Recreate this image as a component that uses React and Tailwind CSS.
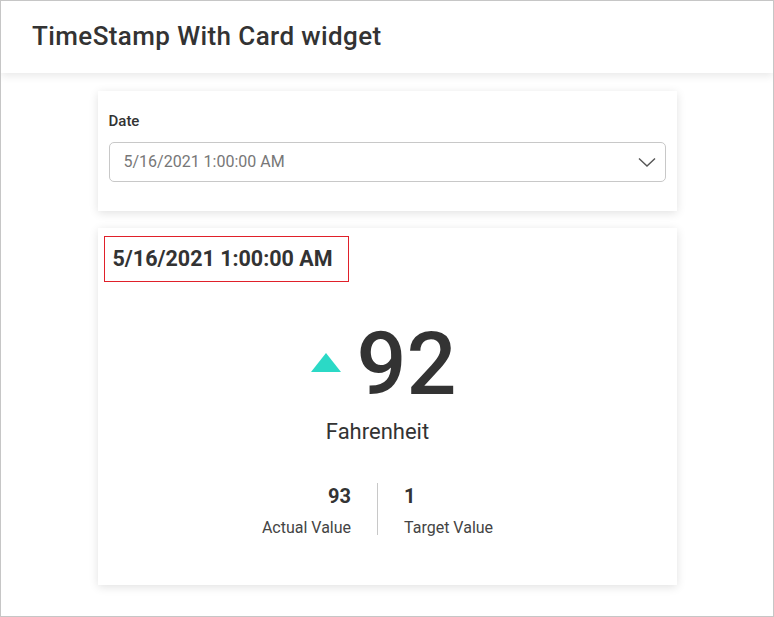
import React from 'react';

const App = () => {
    return (
        <div className="w-[774px] h-[617px] border border-[#c6c6c6] bg-white overflow-hidden font-['Roboto',sans-serif] text-[#333]">
            <div className="h-[72px] flex items-center px-[31px] bg-white shadow-[0_3px_8px_rgba(0,0,0,0.09)] relative z-10">
                <h1 className="text-[26px] font-medium leading-none tracking-[0.4px] text-[#333] -mt-[2px]">TimeStamp With Card widget</h1>
            </div>
            <div className="w-[579px] mx-auto pt-[18px]">
                <div className="bg-white shadow-[0_2px_9px_rgba(0,0,0,0.12)] px-[11px] pt-[21px] h-[120px]">
                    <label className="block text-[15px] font-medium leading-[18px] text-[#333]">Date</label>
                    <div className="mt-[12px] h-[40px] border border-[#c8c8c8] rounded-[5px] flex items-center justify-between pl-[14px] pr-[9px]">
                        <span className="text-[16px] text-[#777]">5/16/2021 1:00:00 AM</span>
                        <svg width="18" height="11" viewBox="0 0 18 11" fill="none">
                            <path d="M1 1.5L9 9L17 1.5" stroke="#555" strokeWidth="1.4" />
                        </svg>
                    </div>
                </div>
                <div className="mt-[17px] bg-white shadow-[0_2px_9px_rgba(0,0,0,0.12)] h-[357px] pt-[8px] px-[6px]">
                    <div className="w-[245px] h-[46px] border border-[#e0202a] flex items-center pl-[8px]">
                        <span className="text-[21.5px] font-bold text-[#333]">5/16/2021 1:00:00 AM</span>
                    </div>
                    <div className="flex flex-col items-center pr-[19px]">
                        <div className="flex items-center gap-[15px] mt-[37px] ml-[13px] h-[90px]">
                            <svg width="30" height="19" viewBox="0 0 30 19" className="-mt-[4px]">
                                <polygon points="15,0 30,19 0,19" fill="#2bd9c6" />
                            </svg>
                            <span className="text-[88px] font-medium leading-none text-[#333]">92</span>
                        </div>
                        <div className="text-[22px] leading-none mt-[12px] text-[#333]">Fahrenheit</div>
                        <div className="flex mt-[40px]">
                            <div className="flex flex-col items-end pr-[26px] pt-[1px]">
                                <span className="text-[20px] font-bold leading-[24px] text-[#333]">93</span>
                                <span className="text-[16px] leading-[18px] mt-[11px] text-[#444]">Actual Value</span>
                            </div>
                            <div className="w-px h-[52px] bg-[#c8c8c8]"></div>
                            <div className="flex flex-col items-start pl-[26px] pt-[1px]">
                                <span className="text-[20px] font-bold leading-[24px] text-[#333]">1</span>
                                <span className="text-[16px] leading-[18px] mt-[11px] text-[#444]">Target Value</span>
                            </div>
                        </div>
                    </div>
                </div>
            </div>
        </div>
    );
};

export default App;
